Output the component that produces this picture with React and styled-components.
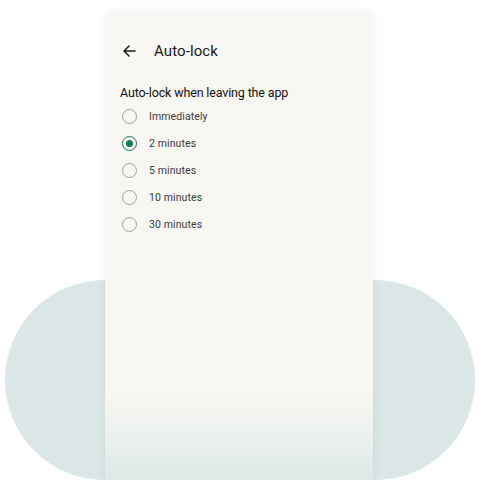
import React, { useState } from "react";
import styled, { createGlobalStyle } from "styled-components";

const Global = createGlobalStyle`
  html, body { margin: 0; padding: 0; background: #ffffff; }
  body { font-family: Roboto, "Noto Sans", "Liberation Sans", sans-serif; }
`;

const Stage = styled.div`
  width: 480px;
  height: 480px;
  overflow: hidden;
  display: grid;
  grid-template: 1fr / 1fr;
  background: #ffffff;
`;

const Pill = styled.div`
  grid-area: 1 / 1;
  align-self: start;
  margin: 280px 5px 0 5px;
  height: 200px;
  border-radius: 100px;
  background: #dae7e6;
`;

const Phone = styled.div`
  grid-area: 1 / 1;
  align-self: start;
  justify-self: start;
  margin: 12px 0 0 105px;
  width: 268px;
  height: 490px;
  border-radius: 7px 7px 0 0;
  background: linear-gradient(
    to bottom,
    #f8f7f3 0px,
    #f8f7f3 380px,
    #eaf0ec 430px,
    #dbe7e6 470px
  );
  box-shadow: 0 0 10px rgba(0, 0, 0, 0.07);
  display: flex;
  flex-direction: column;
`;

const TopBar = styled.div`
  display: flex;
  align-items: center;
  height: 24px;
  margin-top: 27px;
  padding-left: 16px;
  gap: 17px;
`;

const BackButton = styled.span`
  display: flex;
  width: 16px;
  height: 16px;
  color: #1d1d1d;
`;

const Title = styled.h1`
  margin: 0;
  font-size: 15px;
  font-weight: 400;
  color: #1b1b1b;
  letter-spacing: 0.1px;
`;

const Section = styled.div`
  display: flex;
  flex-direction: column;
  padding: 22px 0 0 15px;
`;

const SectionTitle = styled.h2`
  margin: 0 0 2px 0;
  font-size: 12.5px;
  font-weight: 400;
  color: #111111;
  line-height: 16px;
  letter-spacing: -0.15px;
`;

const Option = styled.label`
  display: flex;
  align-items: center;
  height: 27px;
  gap: 12px;
  cursor: pointer;
`;

const Radio = styled.span`
  box-sizing: border-box;
  width: 15px;
  height: 15px;
  margin-left: 2px;
  border-radius: 50%;
  border: 1.6px solid ${(p) => (p.$on ? "#0f7c5c" : "#9aa3a6")};
  display: flex;
  align-items: center;
  justify-content: center;
  &::after {
    content: "";
    width: 7px;
    height: 7px;
    border-radius: 50%;
    background: #0f7c5c;
    display: ${(p) => (p.$on ? "block" : "none")};
  }
`;

const OptionText = styled.span`
  font-size: 10.5px;
  color: #3b3b3b;
  letter-spacing: 0.1px;
`;

const options = ["Immediately", "2 minutes", "5 minutes", "10 minutes", "30 minutes"];

export default function App() {
  const [sel, setSel] = useState(1);
  return (
    <>
      <Global />
      <Stage>
        <Pill />
        <Phone>
          <TopBar>
            <BackButton>
              <svg width="16" height="16" viewBox="0 0 16 16" fill="none">
                <path d="M14 8H3M8 3L3 8l5 5" stroke="currentColor" strokeWidth="1.5" strokeLinecap="round" strokeLinejoin="round" />
              </svg>
            </BackButton>
            <Title>Auto-lock</Title>
          </TopBar>
          <Section>
            <SectionTitle>Auto-lock when leaving the app</SectionTitle>
            {options.map((o, i) => (
              <Option key={o} onClick={() => setSel(i)}>
                <Radio $on={sel === i} />
                <OptionText>{o}</OptionText>
              </Option>
            ))}
          </Section>
        </Phone>
      </Stage>
    </>
  );
}
